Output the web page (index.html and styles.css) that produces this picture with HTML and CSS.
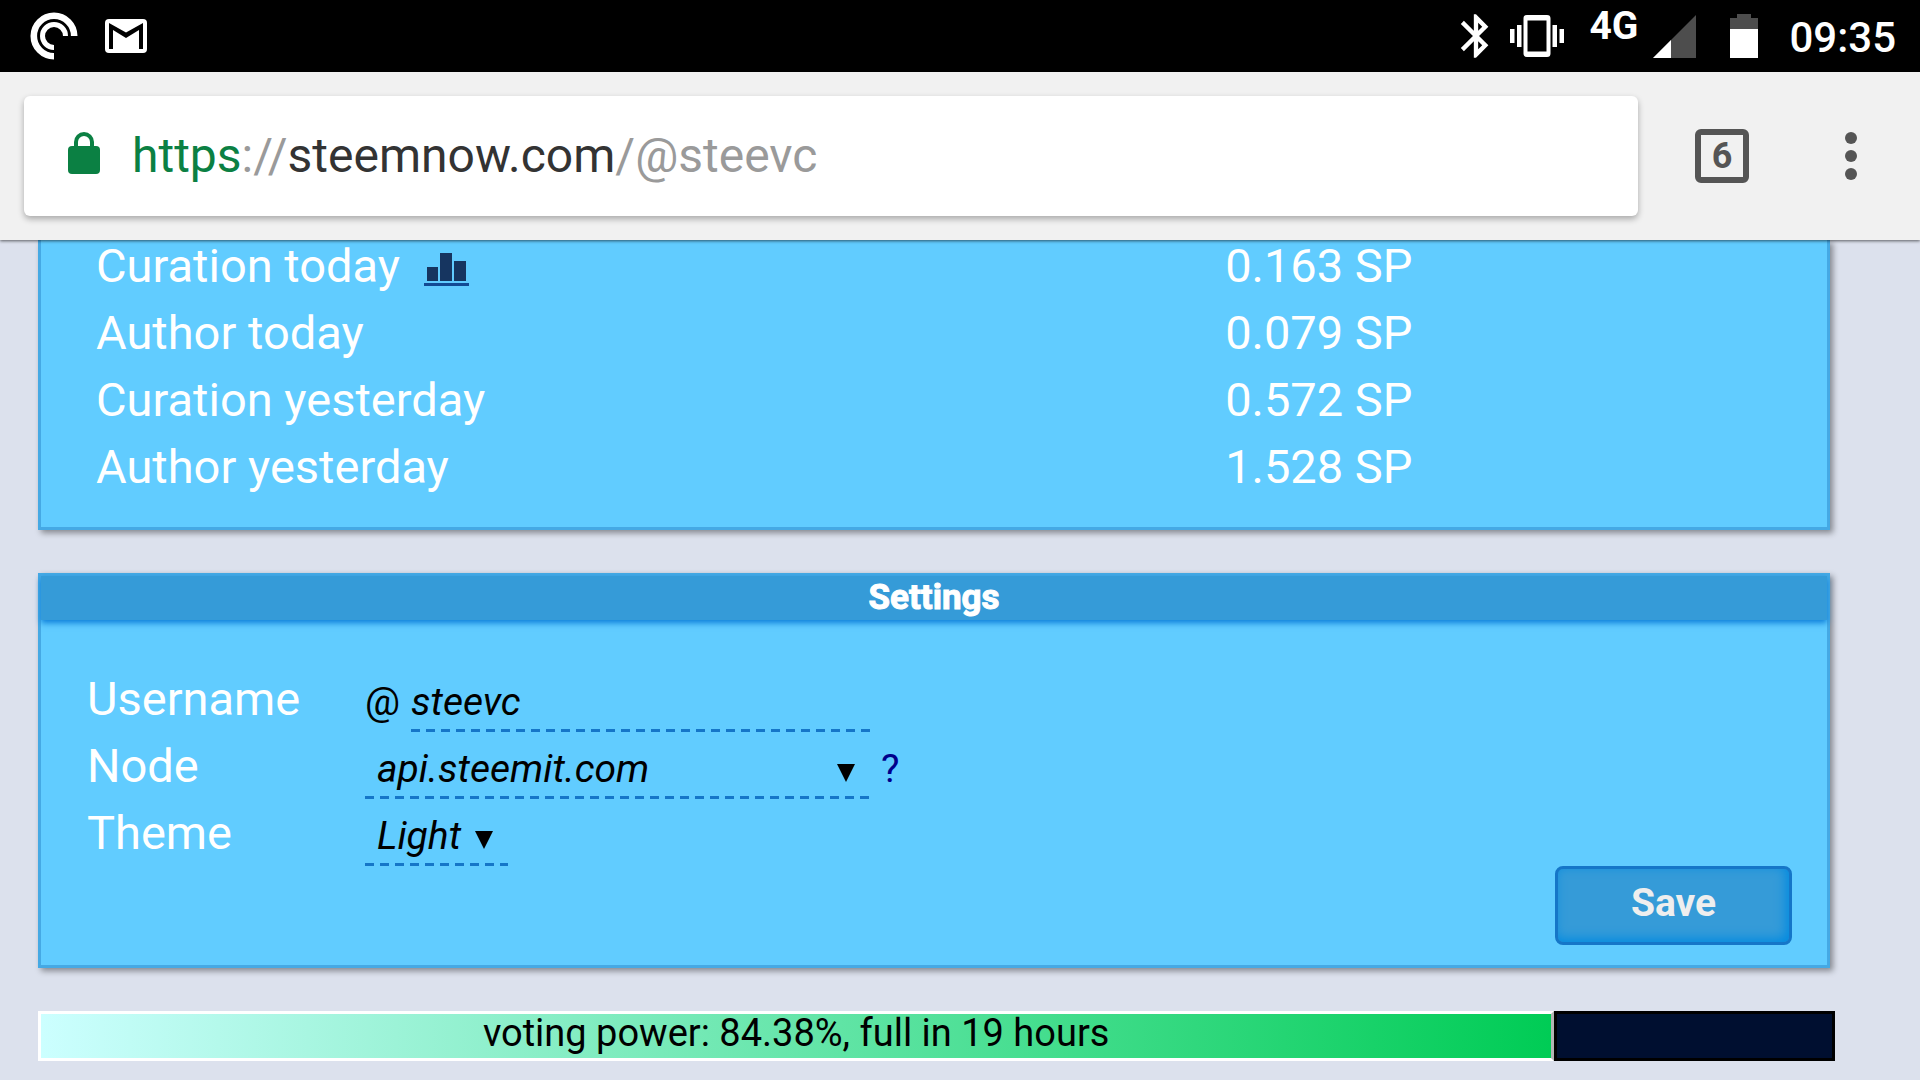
FILE: index.html
```html
<!DOCTYPE html>
<html lang="en">
<head>
    <meta charset="UTF-8">
    <meta name="viewport" content="width=device-width, initial-scale=1.0">
    <title>SteemNow - @steevc</title>
    <link rel="stylesheet" href="styles.css">
</head>
<body>

    <div class="statusbar">
        <div class="notifications">
            <svg width="48" height="48" viewBox="0 0 48 48" fill="none" stroke="#fff">
                <path d="M24 44.2A20.2 20.2 0 1 1 44.2 24" stroke-width="6.6"/>
                <path d="M24 35.5A11.5 11.5 0 1 1 35.5 24" stroke-width="5"/>
            </svg>
            <svg width="42" height="34" viewBox="0 0 42 34">
                <rect width="42" height="34" rx="4" fill="#fff"/>
                <path d="M4 4L21 13.500L38 4V30H34V11L21 19L8 11V30H4Z" fill="#000"/>
            </svg>
        </div>
        <div class="system">
            <svg width="52" height="52" viewBox="0 0 24 24" fill="#fff">
                <path d="M17.71 7.71L12 2h-1v7.590L6.410 5 5 6.410 10.590 12 5 17.590 6.410 19 11 14.410V22h1l5.710-5.710-4.300-4.290 4.300-4.290zM13 5.830l1.880 1.880L13 9.590V5.830zm1.880 10.460L13 18.170v-3.760l1.880 1.880z"/>
            </svg>
            <svg width="54" height="42" viewBox="0 0 54 42" fill="#fff">
                <path d="M0 14h4.500v14H0zM7 10h4.500v22H7zM42.500 10H47v22h-4.500zM49.500 14H54v14h-4.500z"/>
                <path fill-rule="evenodd" d="M17 0h20a3.500 3.500 0 0 1 3.500 3.500v35a3.500 3.500 0 0 1-3.500 3.500H17a3.500 3.500 0 0 1-3.500-3.500v-35A3.500 3.500 0 0 1 17 0zM17.500 5.500v31h19v-31z"/>
            </svg>
            <span class="network">4G</span>
            <svg class="signal" width="43" height="43" viewBox="0 0 43 43">
                <path d="M43 0V43H0Z" fill="#4d4d4d"/>
                <path d="M18 25V43H0Z" fill="#fff"/>
            </svg>
            <svg class="battery" width="28" height="44" viewBox="0 0 28 44">
                <path d="M7 0h14v4h7v11H0V4h7z" fill="#4d4d4d"/>
                <path d="M0 15h28v29H0z" fill="#fff"/>
            </svg>
            <span class="clock">09:35</span>
        </div>
    </div>

    <div class="toolbar">
        <div class="omnibox">
            <svg class="lock" width="32" height="42" viewBox="0 0 32 42">
                <rect y="14" width="32" height="28" rx="4" fill="#0b8043"/>
                <path d="M8 16V10a8 8 0 0 1 16 0V16" fill="none" stroke="#0b8043" stroke-width="4"/>
            </svg>
            <a class="url" href="https://steemnow.com/@steevc"><span class="scheme">https</span>://<span class="host">steemnow.com</span>/@steevc</a>
        </div>
        <button class="tabs" aria-label="Open tabs">6</button>
        <button class="menu" aria-label="Menu">
            <svg width="12" height="48" viewBox="0 0 12 48" fill="#555">
                <circle cx="6" cy="6" r="6"/>
                <circle cx="6" cy="24" r="6"/>
                <circle cx="6" cy="42" r="6"/>
            </svg>
        </button>
    </div>

    <main>
        <section class="card rewards">
            <table>
                <tr>
                    <th scope="row">Curation today
                        <svg class="chart" width="45" height="33" viewBox="0 0 45 33" fill="#163560">
                            <path d="M3 14h11v14H3zM16 0h12v28H16zM30 8h12v20H30z"/>
                            <path d="M0 30h45v3H0z" fill="#124a94"/>
                        </svg>
                    </th>
                    <td>0.163 SP</td>
                </tr>
                <tr><th scope="row">Author today</th><td>0.079 SP</td></tr>
                <tr><th scope="row">Curation yesterday</th><td>0.572 SP</td></tr>
                <tr><th scope="row">Author yesterday</th><td>1.528 SP</td></tr>
            </table>
        </section>

        <section class="card settings">
            <h2>Settings</h2>
            <form>
                <div class="row">
                    <label for="username">Username</label>
                    <span class="at">@</span>
                    <input id="username" class="dashed" type="text" value="steevc">
                </div>
                <div class="row">
                    <label for="node">Node</label>
                    <span class="select dashed node">
                        <select id="node"><option>api.steemit.com</option></select>
                        <svg width="18" height="18" viewBox="0 0 18 18"><path d="M0 0h18L9 18z"/></svg>
                    </span>
                    <a class="help" href="#node">?</a>
                </div>
                <div class="row">
                    <label for="theme">Theme</label>
                    <span class="select dashed theme">
                        <select id="theme"><option>Light</option><option>Dark</option></select>
                        <svg width="18" height="18" viewBox="0 0 18 18"><path d="M0 0h18L9 18z"/></svg>
                    </span>
                </div>
                <button class="save" type="button">Save</button>
            </form>
        </section>

        <div class="power">
            <div class="power-fill" style="width: 84.38%">voting power: 84.38%, full in 19 hours</div>
            <div class="power-rest"></div>
        </div>
    </main>

</body>
</html>
```
FILE: styles.css
```css
* {
    box-sizing: border-box;
}
body {
    margin: 0;
    min-height: 100vh;
    background-color: #dce1ed;
    font-family: Roboto, sans-serif;
    font-size: 39px;
    overflow: hidden;
}
svg {
    display: block;
    flex-shrink: 0;
}
button, input, select {
    font: inherit;
    border: none;
    background: none;
    padding: 0;
    margin: 0;
}
a {
    text-decoration: none;
}

/* phone status bar */
.statusbar {
    display: flex;
    justify-content: space-between;
    height: 72px;
    padding: 0 24px 0 30px;
    background-color: #000;
    color: #fff;
}
.notifications, .system {
    display: flex;
    align-items: center;
}
.notifications {
    gap: 27px;
}
.system svg:nth-child(2) {
    margin: 0 25px 0 8px;
}
.network {
    align-self: flex-start;
    padding-top: 5px;
    font-size: 39px;
    line-height: 42px;
    font-weight: 700;
}
.signal {
    margin: 0 34px 0 15px;
}
.clock {
    margin-left: 31px;
    padding-top: 2px;
    font-size: 42px;
    font-weight: 500;
}

/* browser toolbar */
.toolbar {
    position: relative;
    display: flex;
    align-items: center;
    height: 168px;
    padding: 0 48px 0 24px;
    background-color: #f1f1f1;
    box-shadow: 0 1px 3px rgba(0, 0, 0, 0.6);
}
.omnibox {
    flex: 1;
    display: flex;
    align-items: center;
    gap: 32px;
    height: 120px;
    padding-left: 44px;
    border-radius: 6px;
    background-color: #fff;
    box-shadow: 0 3px 6px rgba(0, 0, 0, 0.3);
}
.lock {
    margin-bottom: 6px;
}
.url {
    padding-bottom: 2px;
    font-size: 48px;
    color: #9a9a9a;
}
.scheme {
    color: #0b8043;
}
.host {
    color: #333;
}
.tabs {
    width: 54px;
    height: 54px;
    margin-left: 57px;
    border: 6px solid #555;
    border-radius: 6px;
    color: #555;
    font-size: 36px;
    line-height: 42px;
    font-weight: 700;
}
.menu {
    width: 42px;
    margin-left: 81px;
}
.menu svg {
    margin: 0 auto;
}

/* page */
main {
    display: flex;
    flex-direction: column;
    padding: 0 90px 0 38px;
}
.card {
    margin-bottom: 43px;
    border: 3px solid #45a9e4;
    background-color: #61ccff;
    box-shadow: 3px 3px 6px rgba(0, 0, 0, 0.4);
    color: #fff;
}
.rewards {
    border-top: none;
    padding: 0 0 27px 55px;
}
.rewards table {
    width: 100%;
    border-collapse: collapse;
    font-size: 47px;
    line-height: 66px;
}
.rewards th, .rewards td {
    height: 67px;
    padding: 0;
    text-align: left;
    font-weight: 400;
}
.rewards tr:first-child > * {
    height: 59px;
    line-height: 52px;
    vertical-align: top;
}
.rewards th {
    width: 65%;
}
.rewards td {
    padding-left: 4px;
}
.chart {
    display: inline-block;
    margin-left: 12px;
    vertical-align: -4px;
}
.settings h2 {
    margin: 0;
    background-color: #359bd8;
    box-shadow: 0 3px 6px #0d7fda;
    font-size: 35px;
    line-height: 44px;
    text-align: center;
    -webkit-text-stroke: 1px #fff;
}
.settings form {
    display: flex;
    flex-direction: column;
    padding: 45px 35px 20px 46px;
}
.row {
    display: flex;
    align-items: baseline;
    height: 67px;
    color: #000;
}
.row label {
    width: 278px;
    color: #fff;
    font-size: 47px;
    line-height: 67px;
}
.dashed {
    height: 60px;
    background: linear-gradient(to right, #1576c8 9px, transparent 9px) 0 100% / 15px 3px repeat-x;
}
.at {
    width: 46px;
}
.row input {
    width: 462px;
    font-style: italic;
    outline: none;
}
.select {
    display: grid;
    align-items: center;
}
.select select {
    grid-area: 1 / 1;
    appearance: none;
    padding-left: 12px;
    font-style: italic;
}
.select svg {
    grid-area: 1 / 1;
    justify-self: end;
    margin: 8px 15px 0 0;
    pointer-events: none;
}
.node {
    width: 505px;
}
.theme {
    width: 143px;
}
.help {
    margin-left: 11px;
    color: #00008b;
}
.save {
    align-self: flex-end;
    width: 237px;
    height: 79px;
    padding-bottom: 6px;
    border: 3px solid #1576c8;
    border-radius: 8px;
    background-color: #359bd8;
    box-shadow: inset -3px -3px 12px #008ae0;
    color: #eee;
    font-size: 39px;
    font-weight: 700;
}

/* voting power bar */
.power {
    display: flex;
    height: 50px;
    margin-right: -5px;
    color: #000;
    font-size: 38px;
    line-height: 38px;
    text-align: center;
}
.power-fill {
    border: 3px solid #fff;
    border-right-color: #b4b4b4;
    background: linear-gradient(to right, #ccffff, #00cc55);
}
.power-rest {
    flex: 1;
    border: 3px solid #000;
    background-color: #000f30;
}
```
